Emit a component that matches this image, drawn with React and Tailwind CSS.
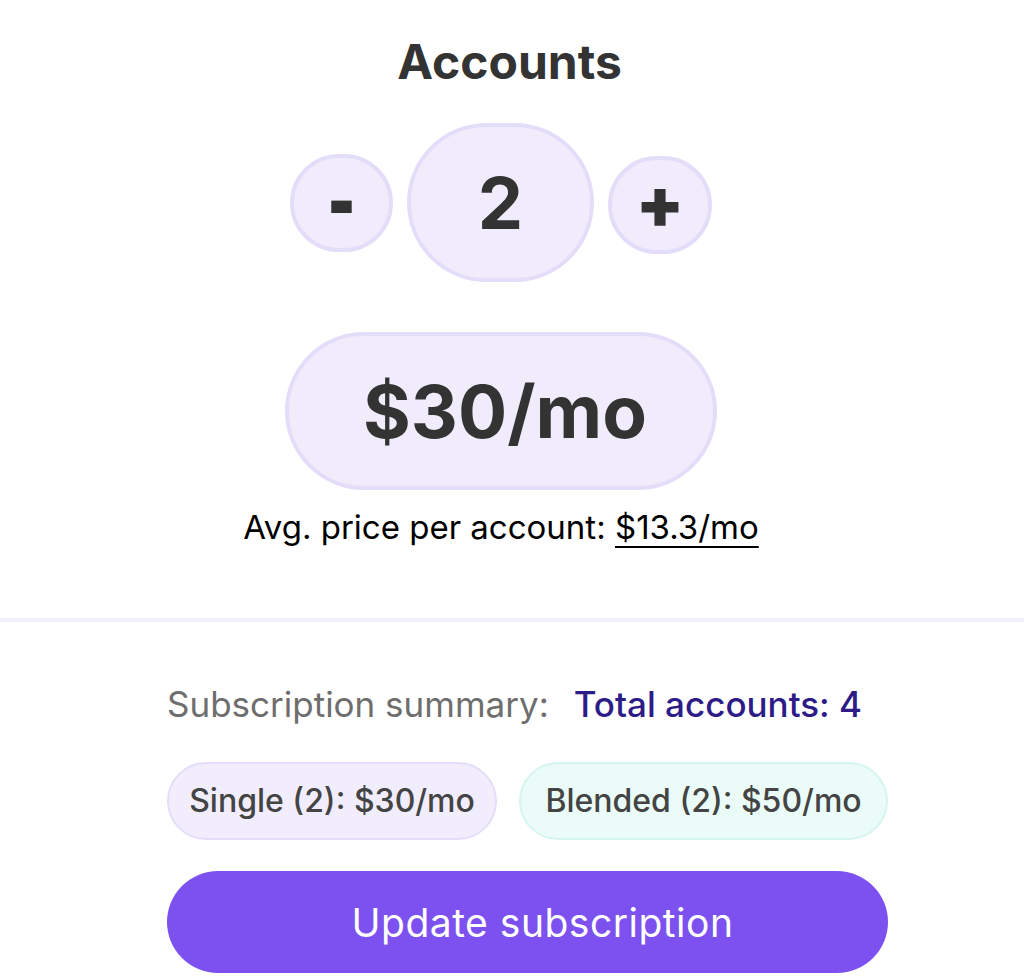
import React from "react";

const App = () => {
  return (
    <div className="w-[1024px] h-[977px] bg-white flex flex-col font-['Inter',sans-serif] text-[#333333] overflow-hidden">
      <div className="w-[1002px] flex flex-col items-center">
        <h1 className="mt-[38px] pl-[17px] text-[48px] font-bold leading-none">Accounts</h1>

        <div className="mt-[37px] flex items-center gap-[14px]">
          <button className="w-[103px] h-[98px] rounded-full bg-[#f0ecfc] border-4 border-[#e4ddf9] flex items-center justify-center text-[60px] font-black leading-none">
            <span className="inline-block scale-y-[1.4] -mt-[6px]">-</span>
          </button>
          <div className="w-[187px] h-[159px] rounded-full bg-[#f0ecfc] border-4 border-[#e4ddf9] flex items-center justify-center text-[72px] font-bold leading-none">
            2
          </div>
          <button className="w-[104px] h-[98px] rounded-full bg-[#f0ecfc] border-4 border-[#e4ddf9] flex items-center justify-center text-[70px] font-black leading-none mt-[4px]">
            <span className="-mt-[4px]">+</span>
          </button>
        </div>

        <div className="mt-[50px] w-[432px] h-[158px] rounded-full bg-[#f0ecfc] border-4 border-[#e4ddf9] flex items-center justify-center pl-[8px] text-[73px] font-bold leading-none">
          $30/mo
        </div>

        <p className="mt-[21px] text-[33px] leading-none text-black">
          Avg. price per account:{" "}
          <span className="underline decoration-2 underline-offset-[7px]">$13.3/mo</span>
        </p>
      </div>

      <div className="mt-[74px] h-[4px] w-full bg-[#f2f0fd]" />

      <div className="ml-[167px] w-[721px] flex flex-col">
        <div className="mt-[65px] flex items-center gap-[25px] text-[35px] leading-none">
          <span className="text-[#6e6e6e]">Subscription summary:</span>
          <span className="text-[#2d1b87] font-medium">Total accounts: 4</span>
        </div>

        <div className="mt-[40px] flex justify-between">
          <div className="h-[78px] w-[330px] rounded-full bg-[#f1edfd] border-2 border-[#e4ddf9] flex items-center justify-center text-[32px] font-medium text-[#444444]">
            Single (2): $30/mo
          </div>
          <div className="h-[78px] w-[369px] rounded-full bg-[#ebfbf8] border-2 border-[#d5f5ee] flex items-center justify-center text-[32px] font-medium text-[#444444]">
            Blended (2): $50/mo
          </div>
        </div>

        <button className="mt-[31px] h-[102px] w-full rounded-full bg-[#7c51ef] pl-[30px] text-white text-[39px] tracking-[0.5px] leading-none">
          Update subscription
        </button>
      </div>
    </div>
  );
};

export default App;
